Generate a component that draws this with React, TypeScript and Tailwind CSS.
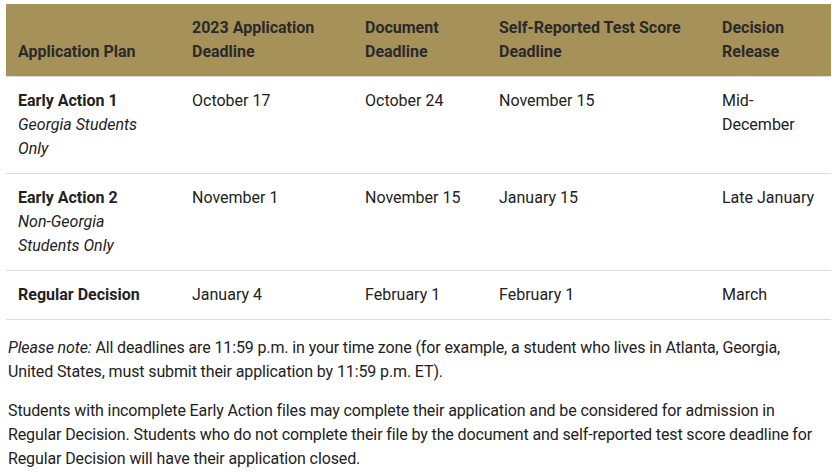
const rows = [
  {
    plan: "Early Action 1",
    note: "Georgia Students Only",
    app: "October 17",
    doc: "October 24",
    score: "November 15",
    release: "Mid-December",
  },
  {
    plan: "Early Action 2",
    note: "Non-Georgia Students Only",
    app: "November 1",
    doc: "November 15",
    score: "January 15",
    release: "Late January",
  },
  {
    plan: "Regular Decision",
    note: null,
    app: "January 4",
    doc: "February 1",
    score: "February 1",
    release: "March",
  },
];

export default function App() {
  return (
    <div className="w-[832px] bg-white px-[6px] pt-1 text-base leading-6 text-[#222]" style={{ fontFamily: "Roboto, Arial, sans-serif" }}>
      <table className="w-[825px] table-fixed border-collapse">
        <colgroup>
          <col className="w-[174px]" />
          <col className="w-[173px]" />
          <col className="w-[134px]" />
          <col className="w-[223px]" />
          <col className="w-[121px]" />
        </colgroup>
        <thead>
          <tr className="bg-[#a69158] text-left font-bold text-[#2a2a2a] align-bottom border-b border-[#dcdcdc]">
            <th className="px-3 py-3">Application Plan</th>
            <th className="px-3 py-3">2023 Application Deadline</th>
            <th className="px-3 py-3">Document Deadline</th>
            <th className="px-3 py-3">Self-Reported Test Score Deadline</th>
            <th className="px-3 py-3">Decision Release</th>
          </tr>
        </thead>
        <tbody>
          {rows.map((r) => (
            <tr key={r.plan} className="border-b border-[#dcdcdc] align-top">
              <td className="px-3 py-3">
                <strong className="font-bold">{r.plan}</strong>
                {r.note && (
                  <>
                    <br />
                    <em>{r.note}</em>
                  </>
                )}
              </td>
              <td className="px-3 py-3">{r.app}</td>
              <td className="px-3 py-3">{r.doc}</td>
              <td className="px-3 py-3">{r.score}</td>
              <td className="px-3 py-3">{r.release}</td>
            </tr>
          ))}
        </tbody>
      </table>

      <div className="px-[2px] pt-4 tracking-[-0.12px]">
        <p>
          <em>Please note:</em> All deadlines are 11:59 p.m. in your time zone (for example, a student who lives in
          Atlanta, Georgia, United States, must submit their application by 11:59 p.m. ET).
        </p>
        <p className="mt-[15px]">
          Students with incomplete Early Action files may complete their application and be considered for admission in
          Regular Decision. Students who do not complete their file by the document and self-reported test score deadline
          for Regular Decision will have their application closed.
        </p>
      </div>
    </div>
  );
}
